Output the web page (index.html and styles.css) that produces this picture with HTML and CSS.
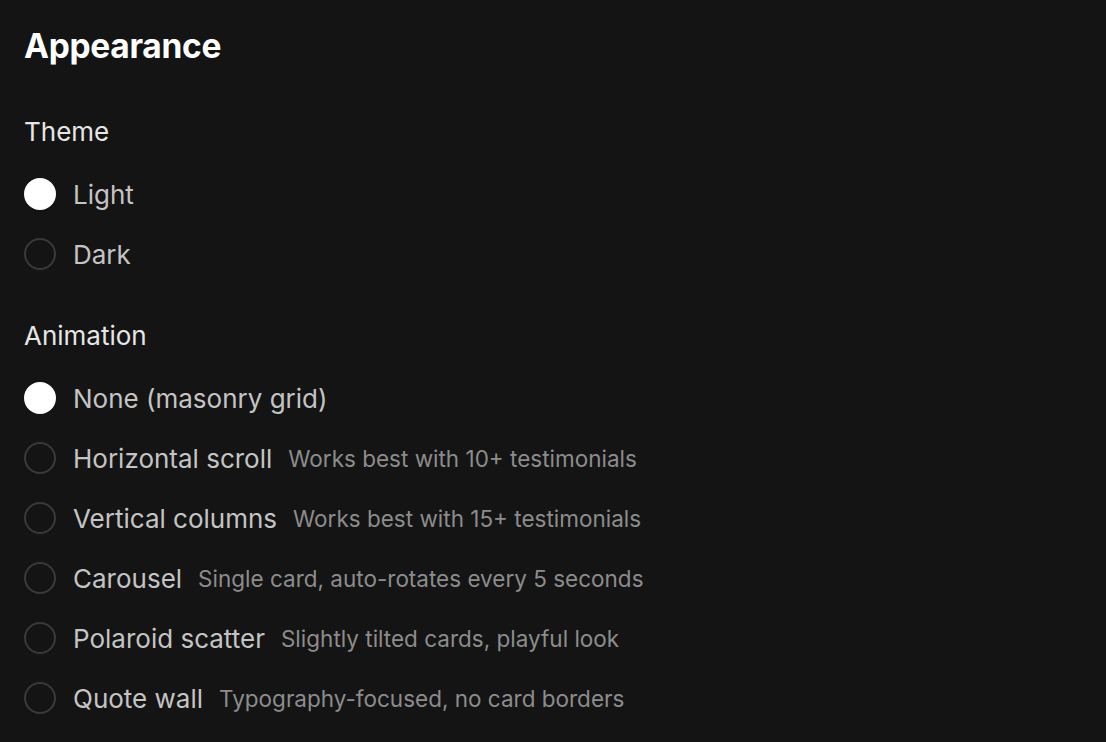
FILE: index.html
```html
<!DOCTYPE html>
<html>
<head>
<meta charset="utf-8">
<link rel="stylesheet" href="styles.css">
</head>
<body>
<div class="page">
  <h1 class="title">Appearance</h1>

  <section class="group">
    <div class="group-label">Theme</div>
    <div class="options">
      <label class="option"><span class="radio checked"></span><span class="opt-label">Light</span></label>
      <label class="option"><span class="radio"></span><span class="opt-label">Dark</span></label>
    </div>
  </section>

  <section class="group">
    <div class="group-label">Animation</div>
    <div class="options">
      <label class="option"><span class="radio checked"></span><span class="opt-label">None (masonry grid)</span></label>
      <label class="option"><span class="radio"></span><span class="opt-label">Horizontal scroll</span><span class="hint">Works best with 10+ testimonials</span></label>
      <label class="option"><span class="radio"></span><span class="opt-label">Vertical columns</span><span class="hint">Works best with 15+ testimonials</span></label>
      <label class="option"><span class="radio"></span><span class="opt-label">Carousel</span><span class="hint">Single card, auto-rotates every 5 seconds</span></label>
      <label class="option"><span class="radio"></span><span class="opt-label">Polaroid scatter</span><span class="hint">Slightly tilted cards, playful look</span></label>
      <label class="option"><span class="radio"></span><span class="opt-label">Quote wall</span><span class="hint">Typography-focused, no card borders</span></label>
    </div>
  </section>
</div>
</body>
</html>
```
FILE: styles.css
```css
html, body {
  margin: 0;
  padding: 0;
  background: #141414;
}
body {
  font-family: "Inter", "Noto Sans", sans-serif;
  color: #c9c9c9;
}
.page {
  padding: 24px 24px 0 24px;
}
.title {
  margin: 0;
  font-size: 33.5px;
  font-weight: 700;
  color: #ffffff;
  line-height: 44px;
  letter-spacing: -0.3px;
}
.group {
  margin-top: 48px;
}
.group + .group {
  margin-top: 36px;
}
.group-label {
  font-size: 26px;
  line-height: 32px;
  color: #e6e6e6;
}
.options {
  display: flex;
  flex-direction: column;
  margin-top: 16px;
}
.option {
  display: flex;
  align-items: center;
  height: 60px;
}
.radio {
  box-sizing: border-box;
  width: 32px;
  height: 32px;
  border-radius: 50%;
  border: 2px solid #3a3a3a;
  flex: none;
  margin-right: 17px;
}
.radio.checked {
  background: #ffffff;
  border-color: #ffffff;
}
.opt-label {
  font-size: 26px;
  color: #c4c4c4;
}
.hint {
  font-size: 22.5px;
  color: #8c8c8c;
  margin-left: 16px;
}
```
